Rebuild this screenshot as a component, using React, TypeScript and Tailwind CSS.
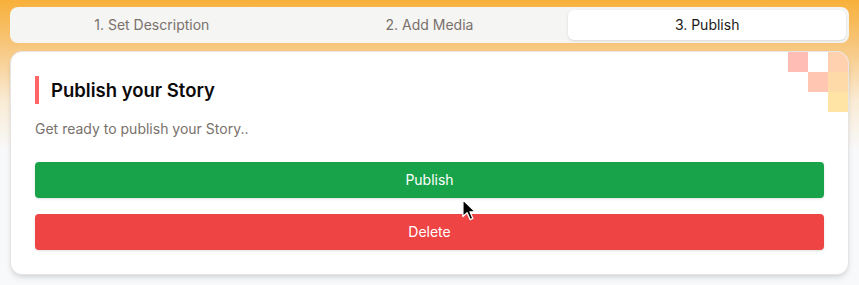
import { useState } from "react";

const tabs = ["1. Set Description", "2. Add Media", "3. Publish"];

// little pixel squares in the card's top-right corner
const pixels = [
  { col: 0, row: 0, color: "bg-[#ffbdb6]" },
  { col: 1, row: 1, color: "bg-[#ffc6b2]" },
  { col: 2, row: 0, color: "bg-[#ffd1ae]" },
  { col: 2, row: 1, color: "bg-[#ffdaa9]" },
  { col: 2, row: 2, color: "bg-[#ffe4a6]" },
];

function Cursor() {
  return (
    <svg
      width="17"
      height="24"
      viewBox="0 0 14 20"
      className="pointer-events-none absolute left-[461px] top-[198px]"
    >
      <path
        d="M1.5 1.5 L1.5 15.5 L5 12.3 L7.5 18 L9.8 17 L7.4 11.5 L11.8 11.5 Z"
        fill="#000"
        stroke="#fff"
        strokeWidth="1.1"
        strokeLinejoin="round"
      />
    </svg>
  );
}

export default function App() {
  const [active, setActive] = useState(2);

  return (
    <div
      className="relative h-[285px] w-full bg-[linear-gradient(to_bottom,#f8b03a_0px,#f7c67c_45px,#faebd4_100px,#f8f9fa_150px)] px-[10px] pt-[7px] font-['Inter',sans-serif]"
    >
      <div className="grid h-9 grid-cols-3 rounded-lg bg-stone-100 p-[3px]">
        {tabs.map((t, i) => (
          <button
            key={t}
            onClick={() => setActive(i)}
            className={
              i === active
                ? "rounded-md bg-white text-sm text-stone-900 shadow-sm"
                : "rounded-md text-sm text-stone-500"
            }
          >
            {t}
          </button>
        ))}
      </div>

      <div className="relative mt-2 overflow-hidden rounded-xl border border-stone-200 bg-white px-6 pt-6 pb-6 shadow-md">
        {pixels.map((p) => (
          <div
            key={`${p.col}-${p.row}`}
            className={`absolute h-5 w-5 ${p.color}`}
            style={{ right: (2 - p.col) * 20, top: p.row * 20 }}
          />
        ))}

        <h2 className="border-l-4 border-red-400 pl-3 text-[18.5px] leading-7 font-semibold text-stone-950">
          Publish your Story
        </h2>
        <p className="mt-[15px] text-sm leading-5 text-stone-500">Get ready to publish your Story..</p>

        <div className="mt-[23px] flex flex-col gap-4">
          <button className="h-9 rounded bg-[#18a34a] text-sm text-white shadow-sm">Publish</button>
          <button className="h-9 rounded bg-[#ef4444] text-sm text-white shadow-sm">Delete</button>
        </div>
      </div>

      <Cursor />
    </div>
  );
}
